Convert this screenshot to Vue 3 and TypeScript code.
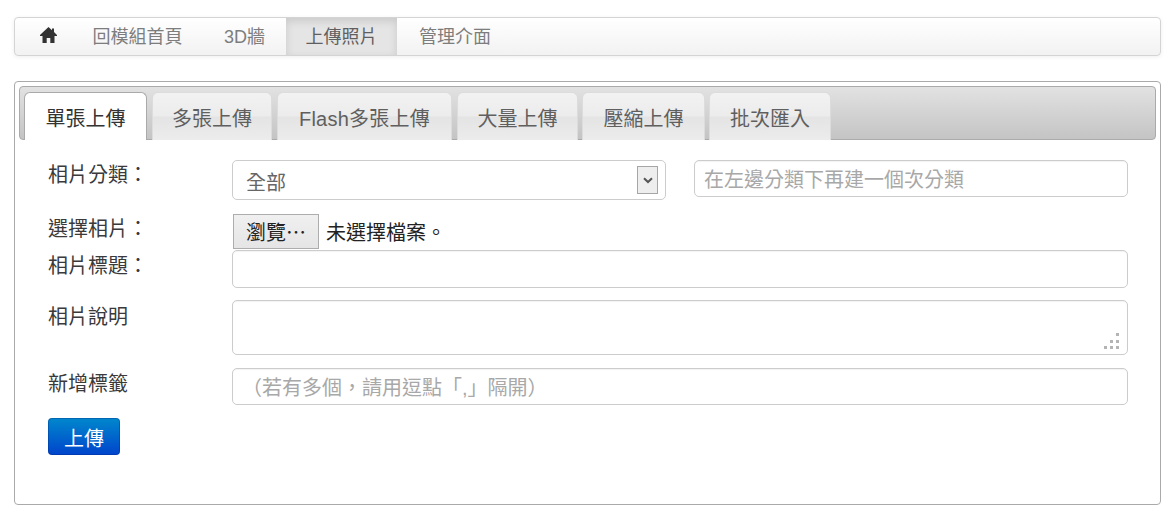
<script setup lang="ts">
const navItems = [
  { label: '回模組首頁', active: false },
  { label: '3D牆', active: false },
  { label: '上傳照片', active: true },
  { label: '管理介面', active: false },
]
const tabs = ['單張上傳', '多張上傳', 'Flash多張上傳', '大量上傳', '壓縮上傳', '批次匯入']
</script>

<template>
  <div class="page">
    <nav class="navbar">
      <a class="nav-home" aria-label="home">
        <svg width="17" height="16" viewBox="0 0 17 16">
          <path d="M8.5 0 L12 3.2 L12 1.5 L14 1.5 L14 5 L17 8 L17 9 L14.5 9 L14.5 16 L10.3 16 L10.3 11 L6.7 11 L6.7 16 L2.5 16 L2.5 9 L0 9 L0 8 Z" fill="#333" />
        </svg>
      </a>
      <a v-for="item in navItems" :key="item.label" class="nav-item" :class="{ active: item.active }">{{ item.label }}</a>
    </nav>

    <section class="panel">
      <div class="tabs">
        <a v-for="(tab, i) in tabs" :key="tab" class="tab" :class="[`tab-${i}`, { active: i === 0 }]">{{ tab }}</a>
      </div>

      <form class="form" @submit.prevent>
        <div class="row row-category">
          <label class="label">相片分類：</label>
          <div class="fields">
            <div class="select">
              <span>全部</span>
              <span class="select-arrow">
                <svg width="10" height="7" viewBox="0 0 10 7"><path d="M1 1.2 L5 5 L9 1.2" fill="none" stroke="#555" stroke-width="2" /></svg>
              </span>
            </div>
            <input class="input sub" type="text" placeholder="在左邊分類下再建一個次分類" />
          </div>
        </div>

        <div class="row row-file">
          <label class="label">選擇相片：</label>
          <div class="file">
            <button class="file-btn" type="button">瀏覽⋯</button>
            <span class="file-name">未選擇檔案。</span>
          </div>
        </div>

        <div class="row row-title">
          <label class="label">相片標題：</label>
          <input class="input grow" type="text" />
        </div>

        <div class="row row-desc">
          <label class="label">相片說明</label>
          <div class="textarea-wrap">
            <textarea class="textarea"></textarea>
            <svg class="grip" width="15" height="16" viewBox="0 0 15 16" fill="#b4b4b4">
              <rect x="12" y="0" width="3" height="3" /><rect x="6" y="7" width="3" height="3" /><rect x="12" y="7" width="3" height="3" />
              <rect x="0" y="13" width="3" height="3" /><rect x="6" y="13" width="3" height="3" /><rect x="12" y="13" width="3" height="3" />
            </svg>
          </div>
        </div>

        <div class="row row-tags">
          <label class="label">新增標籤</label>
          <input class="input grow" type="text" placeholder="（若有多個，請用逗點「,」隔開）" />
        </div>

        <button class="submit" type="submit">上傳</button>
      </form>
    </section>
  </div>
</template>

<style>
html, body { margin: 0; background: #fff; }
</style>

<style scoped>
.page {
  padding: 17px 13px 0 14px;
  font-family: "Liberation Sans", "Noto Sans CJK TC", sans-serif;
  color: #333;
}
.navbar {
  display: flex;
  height: 39px;
  box-sizing: border-box;
  padding-left: 25px;
  border: 1px solid #d4d4d4;
  border-radius: 4px;
  background: linear-gradient(to bottom, #ffffff, #f2f2f2);
  box-shadow: 0 1px 4px rgba(0, 0, 0, 0.07);
  overflow: hidden;
}
.nav-home {
  flex: none;
  width: 32px;
  display: flex;
  align-items: center;
  padding-bottom: 3px;
}
.nav-item {
  flex: none;
  box-sizing: border-box;
  display: flex;
  align-items: center;
  justify-content: center;
  padding-bottom: 4px;
  font-size: 18px;
  color: #7d7d7d;
}
.nav-item:nth-of-type(2) { width: 131px; }
.nav-item:nth-of-type(3) { width: 83px; }
.nav-item:nth-of-type(4) { width: 111px; }
.nav-item:nth-of-type(5) { width: 116px; }
.nav-item.active {
  background: #e5e5e5;
  color: #5f5f5f;
  box-shadow: inset 0 3px 8px rgba(0, 0, 0, 0.125);
}
.panel {
  margin-top: 25px;
  height: 424px;
  box-sizing: border-box;
  padding: 4px;
  border: 1px solid #aaa;
  border-radius: 4px;
}
.tabs {
  display: flex;
  gap: 5px;
  height: 54px;
  box-sizing: border-box;
  padding: 5px 3px 0 4px;
  border: 1px solid #aaa;
  border-radius: 4px;
  background: linear-gradient(to bottom, #e2e2e2, #c4c4c4);
}
.tab {
  height: 48px;
  box-sizing: border-box;
  flex: none;
  line-height: 52px;
  font-size: 20px;
  white-space: nowrap;
  color: #5f5f5f;
  border: 1px solid #dcdcdc;
  border-bottom: 0;
  border-radius: 6px 6px 0 0;
  background: linear-gradient(to bottom, #f2f2f2 0%, #ececec 48%, #e4e4e4 52%, #ececec 100%);
  text-align: center;
}
.tab-0 { width: 123px; }
.tab-1 { width: 120px; }
.tab-2 { width: 175px; letter-spacing: 0.25px; }
.tab-3 { width: 121px; }
.tab-4 { width: 123px; margin-left: -1px; }
.tab-5 { width: 122px; margin-left: -1px; }
.tab.active {
  color: #333;
  background: #fff;
  border-color: #aaa;
  position: relative;
  z-index: 1;
}
.form {
  padding: 20px 28px 0 29px;
  display: flex;
  flex-direction: column;
  align-items: flex-start;
}
.row {
  display: flex;
  align-self: stretch;
}
.row-category { height: 40px; margin-bottom: 14px; }
.row-file { height: 36px; }
.row-title { height: 38px; margin-bottom: 12px; }
.row-desc { height: 55px; margin-bottom: 13px; }
.row-tags { height: 37px; margin-bottom: 13px; }
.label {
  flex: none;
  width: 184px;
  font-size: 20px;
  line-height: 30px;
  color: #3a3a3a;
}
.row-title .label { margin-top: 1px; }
.row-desc .label { margin-top: 2px; }
.row-tags .label { margin-top: 1px; }
.fields {
  display: flex;
  flex: 1;
  gap: 28px;
  align-items: flex-start;
}
.select {
  position: relative;
  box-sizing: border-box;
  width: 434px;
  height: 40px;
  padding: 2px 13px 0;
  display: flex;
  align-items: center;
  font-size: 20px;
  color: #666;
  border: 1px solid #ccc;
  border-radius: 5px;
  background: #fff;
}
.select-arrow {
  position: absolute;
  right: 7px;
  top: 5px;
  width: 21px;
  height: 28px;
  box-sizing: border-box;
  border: 1px solid #a6a6a6;
  background: #eee;
  display: flex;
  align-items: center;
  justify-content: center;
}
.input {
  box-sizing: border-box;
  height: 100%;
  padding: 4px 9px 0;
  font: inherit;
  font-size: 20px;
  color: #555;
  border: 1px solid #ccc;
  border-radius: 5px;
  outline: none;
  background: #fff;
  box-shadow: inset 0 1px 1px rgba(0, 0, 0, 0.05);
  min-width: 0;
}
.input::placeholder { color: #a8a8a8; opacity: 1; }
.sub { width: 434px; height: 37px; }
.grow { flex: 1; }
.file {
  display: flex;
  align-items: flex-start;
  gap: 7px;
  padding-left: 1px;
}
.file-btn {
  box-sizing: border-box;
  width: 86px;
  height: 35px;
  padding: 0;
  font: inherit;
  font-size: 20px;
  color: #222;
  border: 1px solid #adadad;
  background: linear-gradient(to bottom, #f0f0f0, #e5e5e5);
}
.file-name {
  font-size: 20px;
  line-height: 38px;
  color: #222;
}
.textarea-wrap {
  position: relative;
  flex: 1;
}
.textarea {
  display: block;
  box-sizing: border-box;
  width: 100%;
  height: 100%;
  border: 1px solid #ccc;
  border-radius: 5px;
  outline: none;
  resize: none;
  box-shadow: inset 0 1px 1px rgba(0, 0, 0, 0.05);
}
.grip {
  position: absolute;
  right: 9px;
  bottom: 6px;
}
.submit {
  box-sizing: border-box;
  width: 72px;
  height: 37px;
  padding: 1px 0 0;
  font: inherit;
  font-size: 20px;
  color: #fff;
  border: 1px solid rgba(0, 40, 130, 0.35);
  border-radius: 4px;
  background: linear-gradient(to bottom, #0088cc, #0044cc);
  background-origin: border-box;
}
</style>
